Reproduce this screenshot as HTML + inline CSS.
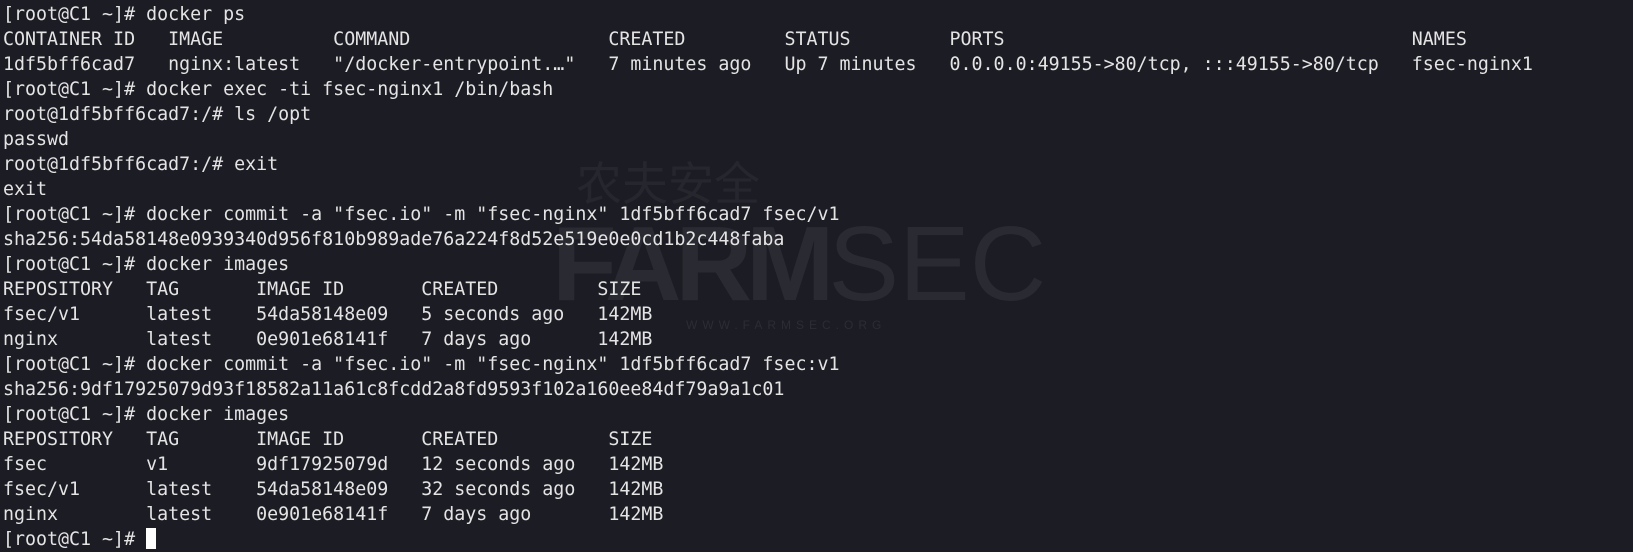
<!DOCTYPE html><html><head><meta charset="utf-8"><style>
html,body{margin:0;padding:0;background:#1c1c24;width:1633px;height:532px;overflow:hidden}
pre{margin:0;position:absolute;left:3px;top:2px;font-family:"DejaVu Sans Mono","Liberation Mono",monospace;font-size:18.3px;line-height:25px;color:#e4e4e4}
.cur{display:inline-block;width:10px;height:21px;background:#fff;vertical-align:-4px}
.wm{position:absolute;font-family:"Liberation Sans","Noto Sans CJK SC",sans-serif;color:#2b2b33}
</style></head><body>
<div class="wm" style="left:576px;top:148px;font-size:46px;color:#26262e">农夫安全</div>
<div class="wm" style="left:552px;top:204px;font-size:106px;font-weight:bold;letter-spacing:-6px;color:#2a2a32">FARM<span style="font-weight:normal;letter-spacing:0">SEC</span></div>
<div class="wm" style="left:686px;top:318px;font-size:12px;letter-spacing:5px;color:#2c2c34">WWW.FARMSEC.ORG</div>
<pre>[root@C1 ~]# docker ps
CONTAINER ID   IMAGE          COMMAND                  CREATED         STATUS         PORTS                                     NAMES
1df5bff6cad7   nginx:latest   "/docker-entrypoint.…"   7 minutes ago   Up 7 minutes   0.0.0.0:49155->80/tcp, :::49155->80/tcp   fsec-nginx1
[root@C1 ~]# docker exec -ti fsec-nginx1 /bin/bash
root@1df5bff6cad7:/# ls /opt
passwd
root@1df5bff6cad7:/# exit
exit
[root@C1 ~]# docker commit -a "fsec.io" -m "fsec-nginx" 1df5bff6cad7 fsec/v1
sha256:54da58148e0939340d956f810b989ade76a224f8d52e519e0e0cd1b2c448faba
[root@C1 ~]# docker images
REPOSITORY   TAG       IMAGE ID       CREATED         SIZE
fsec/v1      latest    54da58148e09   5 seconds ago   142MB
nginx        latest    0e901e68141f   7 days ago      142MB
[root@C1 ~]# docker commit -a "fsec.io" -m "fsec-nginx" 1df5bff6cad7 fsec:v1
sha256:9df17925079d93f18582a11a61c8fcdd2a8fd9593f102a160ee84df79a9a1c01
[root@C1 ~]# docker images
REPOSITORY   TAG       IMAGE ID       CREATED          SIZE
fsec         v1        9df17925079d   12 seconds ago   142MB
fsec/v1      latest    54da58148e09   32 seconds ago   142MB
nginx        latest    0e901e68141f   7 days ago       142MB
[root@C1 ~]# <span class="cur"></span></pre>
</body></html>
